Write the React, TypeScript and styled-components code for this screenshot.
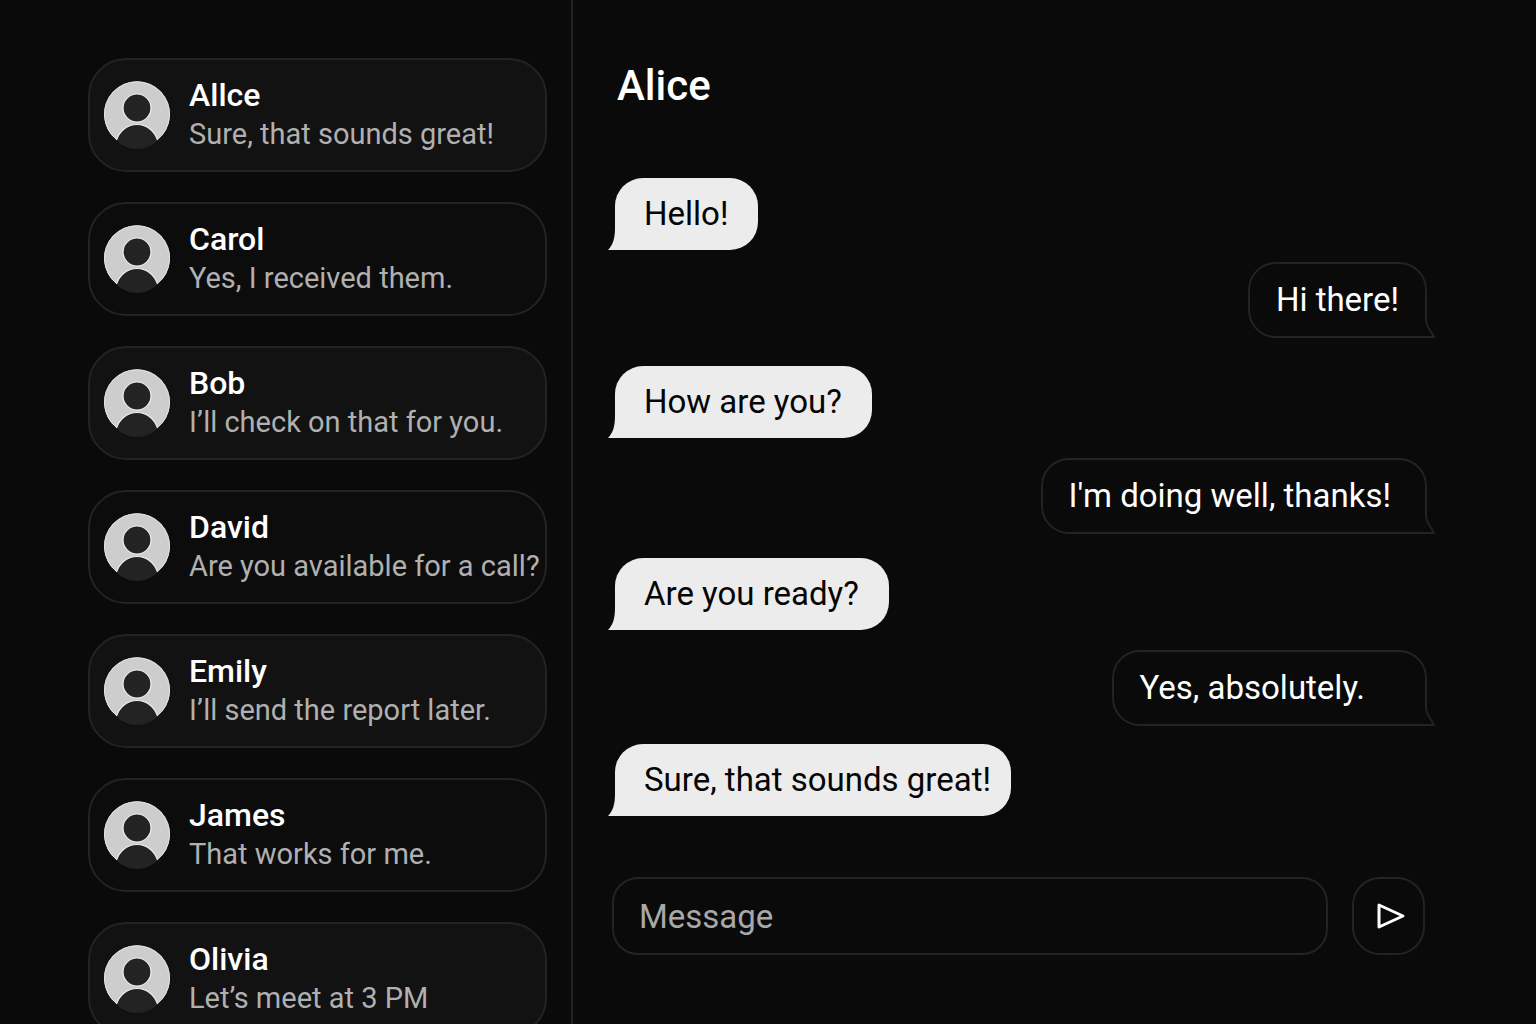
import React, { useState } from "react";
import styled, { createGlobalStyle } from "styled-components";

const color = {
  page: "#0a0a0a",
  line: "#232323",
  raised: "#121212",
  flat: "#0c0c0c",
  text: "#ffffff",
  muted: "#b0b0b0",
  bubble: "#ececec",
  ink: "#050505",
};

const GlobalStyle = createGlobalStyle`
  *, *::before, *::after { box-sizing: border-box; }
  body {
    margin: 0;
    background: ${color.page};
    color: ${color.text};
    font-family: Roboto, "Liberation Sans", sans-serif;
  }
`;

const Page = styled.div`
  display: grid;
  grid-template-columns: 573px minmax(0, 1fr);
  height: 100vh;
  overflow: hidden;
`;

const Sidebar = styled.nav`
  border-right: 2px solid ${color.line};
  padding: 58px 24px 0 88px;
  overflow: hidden;
`;

const ContactList = styled.ul`
  display: flex;
  flex-direction: column;
  gap: 30px;
  margin: 0;
  padding: 0;
  list-style: none;
`;

const ContactCard = styled.button<{ $raised: boolean }>`
  display: flex;
  align-items: center;
  gap: 19px;
  width: 100%;
  padding: 16px 12px 16px 14px;
  border: 2px solid ${color.line};
  border-radius: 38px;
  background: ${(p) => (p.$raised ? color.raised : color.flat)};
  color: inherit;
  font: inherit;
  text-align: left;
  cursor: pointer;
`;

const AvatarArt = styled.svg`
  flex: none;
  width: 66px;
  height: 70px;
`;

const ContactText = styled.span`
  display: flex;
  flex-direction: column;
  min-width: 0;
  white-space: nowrap;
`;

const ContactName = styled.span`
  font-size: 32px;
  line-height: 38px;
  font-weight: 500;
`;

const ContactPreview = styled.span`
  font-size: 29px;
  line-height: 40px;
  color: ${color.muted};
`;

const Chat = styled.main`
  display: flex;
  flex-direction: column;
  min-width: 0;
  padding: 60px 109px 69px 39px;
`;

const ChatTitle = styled.h1`
  margin: 0 0 66px;
  padding-left: 5px;
  font-size: 42px;
  line-height: 52px;
  font-weight: 500;
`;

const Messages = styled.ol`
  flex: 1;
  display: flex;
  flex-direction: column;
  margin: 0;
  padding: 0 0 0 3px;
  list-style: none;
  font-size: 33px;
  line-height: 40px;
`;

const Incoming = styled.li<{ $gap: number; $end: number }>`
  position: relative;
  align-self: flex-start;
  margin-top: ${(p) => p.$gap}px;
  padding: 16px ${(p) => p.$end}px 16px 29px;
  border-radius: 28px 28px 28px 0;
  background: ${color.bubble};
  color: ${color.ink};
`;

const Outgoing = styled.li<{ $gap: number; $end: number }>`
  position: relative;
  align-self: flex-end;
  margin-top: ${(p) => p.$gap}px;
  padding: 16px ${(p) => p.$end}px 16px 26px;
  border: 2px solid ${color.line};
  border-radius: 28px 28px 0 28px;
`;

const IncomingTail = styled.svg`
  position: absolute;
  left: -7px;
  bottom: 0;
  width: 8px;
  height: 22px;
`;

const OutgoingTail = styled.svg`
  position: absolute;
  right: -11px;
  bottom: -2px;
  width: 12px;
  height: 18px;
`;

const Composer = styled.form`
  display: flex;
  gap: 24px;
  padding-right: 2px;
`;

const MessageField = styled.input`
  flex: 1;
  min-width: 0;
  height: 78px;
  padding: 0 25px;
  border: 2px solid ${color.line};
  border-radius: 26px;
  background: transparent;
  color: ${color.text};
  font-family: inherit;
  font-size: 33px;
  outline: none;

  &::placeholder {
    color: #a8a8a8;
    opacity: 1;
  }
`;

const SendButton = styled.button`
  display: flex;
  align-items: center;
  justify-content: center;
  width: 73px;
  height: 78px;
  padding: 0 0 0 4px;
  border: 2px solid ${color.line};
  border-radius: 28px;
  background: transparent;
  color: ${color.text};
  cursor: pointer;
`;

function Avatar() {
  return (
    <AvatarArt viewBox="0 0 66 70" aria-hidden="true">
      <path d="M12.5 60 A33 33 0 1 1 53.5 60 C50 50 42 44.500 33 44.500 S16 50 12.500 60 Z" fill="#cdcdcd" />
      <path d="M12.500 59.500 A32.500 32.500 0 1 1 53.500 59.500" fill="none" stroke="#e2e2e2" />
      <path d="M12.500 60.500 C16 50 24 44.500 33 44.500 S50 50 53.500 60.500 C48 66 41 69 33 69 S18 66 12.500 60.500 Z" fill="#232323" />
      <path d="M12.500 60 C16 50 24 44.500 33 44.500 S50 50 53.500 60" fill="none" stroke="#f0f0f0" strokeWidth="1.200" />
      <circle cx="33" cy="28" r="14" fill="#232323" stroke="#f0f0f0" strokeWidth="1.200" />
    </AvatarArt>
  );
}

const contacts = [
  { name: "Allce", preview: "Sure, that sounds great!", raised: true },
  { name: "Carol", preview: "Yes, I received them.", raised: false },
  { name: "Bob", preview: "I’ll check on that for you.", raised: true },
  { name: "David", preview: "Are you available for a call?", raised: false },
  { name: "Emily", preview: "I’ll send the report later.", raised: true },
  { name: "James", preview: "That works for me.", raised: false },
  { name: "Olivia", preview: "Let’s meet at 3 PM", raised: true },
];

const messages = [
  { mine: false, gap: 0, end: 30, text: "Hello!" },
  { mine: true, gap: 12, end: 26, text: "Hi there!" },
  { mine: false, gap: 28, end: 30, text: "How are you?" },
  { mine: true, gap: 20, end: 34, text: "I'm doing well, thanks!" },
  { mine: false, gap: 24, end: 30, text: "Are you ready?" },
  { mine: true, gap: 20, end: 60, text: "Yes, absolutely." },
  { mine: false, gap: 18, end: 20, text: "Sure, that sounds great!" },
];

export default function App() {
  const [draft, setDraft] = useState("");

  return (
    <>
      <GlobalStyle />
      <Page>
        <Sidebar aria-label="Conversations">
          <ContactList>
            {contacts.map((c) => (
              <li key={c.name}>
                <ContactCard type="button" $raised={c.raised}>
                  <Avatar />
                  <ContactText>
                    <ContactName>{c.name}</ContactName>
                    <ContactPreview>{c.preview}</ContactPreview>
                  </ContactText>
                </ContactCard>
              </li>
            ))}
          </ContactList>
        </Sidebar>
        <Chat>
          <ChatTitle>Alice</ChatTitle>
          <Messages>
            {messages.map((m) =>
              m.mine ? (
                <Outgoing key={m.text} $gap={m.gap} $end={m.end}>
                  {m.text}
                  <OutgoingTail viewBox="0 0 12 18" aria-hidden="true">
                    <path d="M0 0 H3 L10 17 H0 Z" fill={color.page} />
                    <path d="M2 0 C2 6 7 11 10 17 H0" fill="none" stroke={color.line} strokeWidth="2" />
                  </OutgoingTail>
                </Outgoing>
              ) : (
                <Incoming key={m.text} $gap={m.gap} $end={m.end}>
                  {m.text}
                  <IncomingTail viewBox="0 0 8 22" aria-hidden="true">
                    <path d="M8 0 H7 C7 10 5 17 0 22 H8 Z" fill={color.bubble} />
                  </IncomingTail>
                </Incoming>
              )
            )}
          </Messages>
          <Composer onSubmit={(e) => { e.preventDefault(); setDraft(""); }}>
            <MessageField
              aria-label="Message"
              placeholder="Message"
              value={draft}
              onChange={(e) => setDraft(e.target.value)}
            />
            <SendButton type="submit" aria-label="Send">
              <svg width="30" height="28" viewBox="0 0 30 28" aria-hidden="true">
                <path d="M3 3 L27 14 L3 25 Z" fill="none" stroke="currentColor" strokeWidth="3" strokeLinejoin="round" />
              </svg>
            </SendButton>
          </Composer>
        </Chat>
      </Page>
    </>
  );
}
